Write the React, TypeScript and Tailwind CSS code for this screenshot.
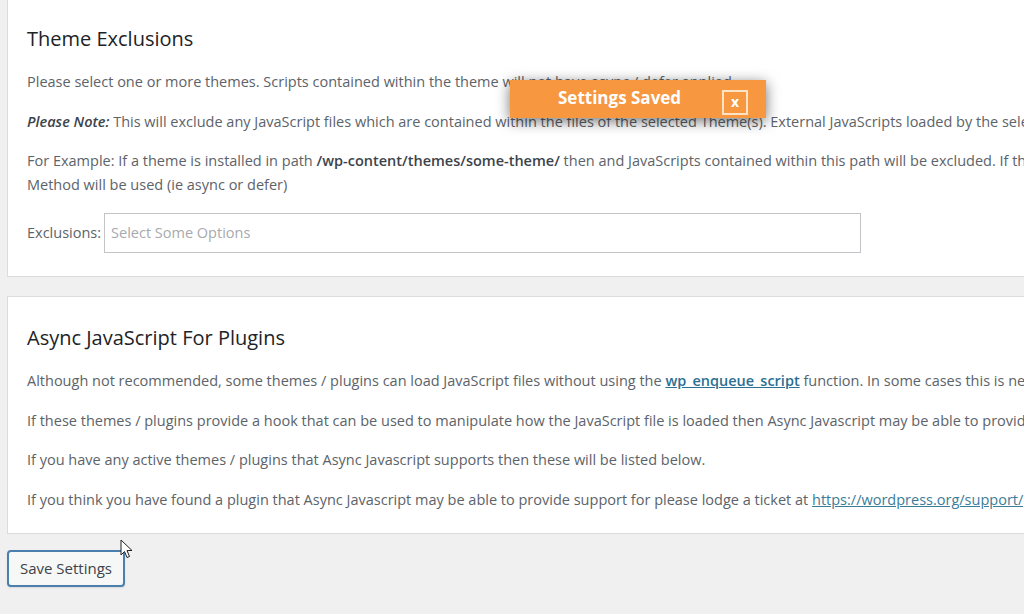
import React from "react";

const para = "whitespace-nowrap leading-[24px]";

function Toast() {
  return (
    <div className="absolute left-[510px] top-[80px] flex h-[38px] w-[256px] items-center bg-[#f7973f] shadow-[0_3px_14px_rgba(0,0,0,0.55)]">
      <span className="pl-[48px] pb-[2px] text-[17px] font-bold text-white">Settings Saved</span>
      <span className="ml-auto mr-[18px] mt-[6px] flex h-[25px] w-[26px] items-center justify-center border-2 border-[#fde2c6] text-[14px] font-bold leading-none text-white">
        x
      </span>
    </div>
  );
}

function Cursor() {
  return (
    <svg className="absolute left-[120px] top-[539px]" width="14" height="20" viewBox="0 0 14 20">
      <path
        d="M1 1 L1 16 L4.5 12.5 L7 18.5 L9.5 17.5 L7 11.5 L12 11.5 Z"
        fill="#fff"
        stroke="#222"
        strokeWidth="1"
        strokeLinejoin="round"
      />
    </svg>
  );
}

export default function App() {
  return (
    <div className="relative h-[614px] w-[1024px] overflow-hidden bg-[#f0f0f1] font-['Open_Sans','Liberation_Sans',sans-serif] text-[14.5px] text-[#5c6369]">
      <div className="w-[1400px] pl-[7px]">
        {/* Theme exclusions */}
        <div className="border-x border-b border-[#dcdcde] bg-white px-[19px] pt-[25px] pb-[23px]">
          <h2 className="text-[20px] leading-[28px] text-[#1d2327]">Theme Exclusions</h2>
          <p className={`${para} mt-[17px]`}>
            Please select one or more themes. Scripts contained within the theme will not have async / defer applied.
          </p>
          <p className={`${para} mt-[16px]`}>
            <em className="font-semibold text-[#3c434a]">Please Note:</em> This will exclude any JavaScript files which are
            contained within the files of the selected Theme(s). External JavaScripts loaded by the selected Theme(s) are not
            affected.
          </p>
          <p className={`${para} mt-[15px]`}>
            For Example: If a theme is installed in path{" "}
            <strong className="font-semibold text-[#3c434a]">/wp-content/themes/some-theme/</strong> then and JavaScripts
            contained within this path will be excluded. If the theme is not excluded then the selected
            <br />
            Method will be used (ie async or defer)
          </p>
          <div className="mt-[16px] flex items-center gap-[3px]">
            <span>Exclusions:</span>
            <div className="flex h-[40px] w-[757px] items-center border border-[#c3c4c7] px-[6px] text-[#a7aaad]">
              Select Some Options
            </div>
          </div>
        </div>

        {/* Plugins */}
        <div className="mt-[19px] border border-[#dcdcde] bg-white px-[19px] pt-[27px] pb-[21px]">
          <h2 className="text-[20px] leading-[28px] text-[#1d2327]">Async JavaScript For Plugins</h2>
          <p className={`${para} mt-[17px]`}>
            Although not recommended, some themes / plugins can load JavaScript files without using the{" "}
            <a className="font-semibold text-[#2b6f93] underline">wp_enqueue_script</a> function. In some cases this is
            necessary for the functionality of the theme / plugin.
          </p>
          <p className={`${para} mt-[16px]`}>
            If these themes / plugins provide a hook that can be used to manipulate how the JavaScript file is loaded then Async
            Javascript may be able to provide support for these themes / plugins.
          </p>
          <p className={`${para} mt-[15px]`}>
            If you have any active themes / plugins that Async Javascript supports then these will be listed below.
          </p>
          <p className={`${para} mt-[16px]`}>
            If you think you have found a plugin that Async Javascript may be able to provide support for please lodge a ticket
            at <a className="text-[#3a7d99] underline">https://wordpress.org/support/plugin/async-javascript</a>
          </p>
        </div>

        <button className="mt-[16px] h-[37px] w-[118px] rounded-[4px] border-2 border-[#4a7fae] bg-[#f6f7f7] text-[15px] text-[#3c434a] shadow-[0_1px_2px_rgba(0,0,0,0.1)]">
          Save Settings
        </button>
      </div>

      <Toast />
      <Cursor />
    </div>
  );
}
